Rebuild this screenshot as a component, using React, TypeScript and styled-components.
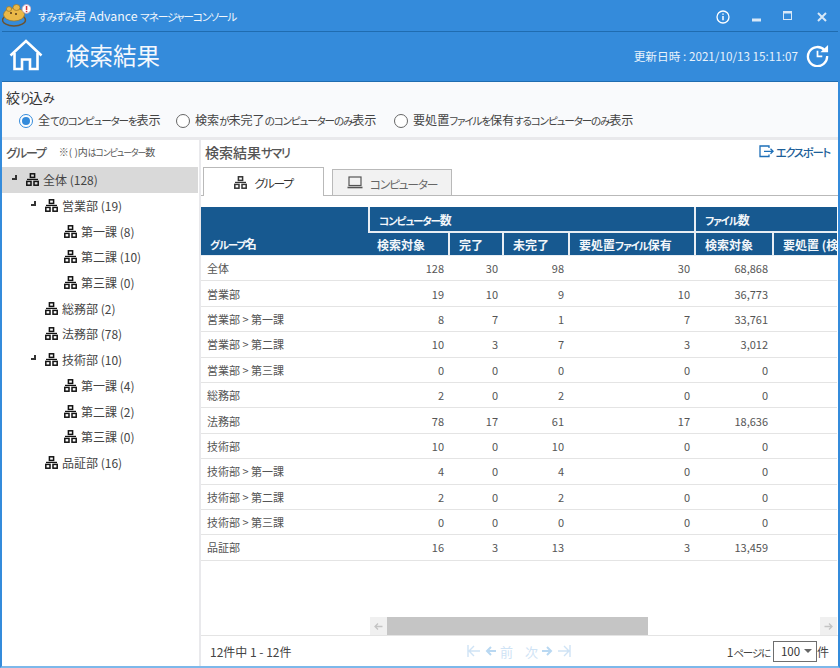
import React from "react";
import styled, { createGlobalStyle } from "styled-components";

const Global = createGlobalStyle`
  html, body { margin: 0; padding: 0; background: #fff; }
  body { font-family: "Noto Sans CJK JP", "Noto Sans", sans-serif; color: #444; font-feature-settings: "palt"; }
`;

const KanaRun = styled.span`font-size: 0.875em; letter-spacing: -0.11em;`;
const Jp = ({ t }: { t: string }) => (
  <>
    {t.split(/([ぁ-んァ-ヶー]+)/).map((s, i) => (i % 2 ? <KanaRun key={i}>{s}</KanaRun> : s))}
  </>
);

const Win = styled.div`
  width: 840px; height: 668px; box-sizing: border-box; overflow: hidden;
  display: flex; flex-direction: column; background: #fff;
  border-left: 2px solid #348bdb; border-right: 2px solid #348bdb; border-bottom: 2px solid #7db8ea;
`;
const TitleBar = styled.div`
  height: 31px; margin: 0 -2px; flex: none; background: #348bdb; border-bottom: 1px solid #1f6cb0;
  display: flex; align-items: center; color: #fff;
`;
const Logo = styled.svg`margin-left: 1px; flex: none;`;
const TitleText = styled.span`font-size: 12.3px; margin-left: 7px; flex: 1; color: #f2f7fc;`;
const WinBtns = styled.div`display: flex; align-items: center; margin: 2px 11px 0 0;`;
const WinBtn = styled.span<{ $gap: number }>`display: flex; margin-left: ${p => p.$gap}px;`;
const Header = styled.div`
  height: 49px; margin: 0 -2px; flex: none; background: #348bdb; border-bottom: 1px solid #1f6cb0;
  display: flex; align-items: center; color: #fff;
`;
const HomeIcon = styled.svg`margin: 0 0 3px 9px; flex: none;`;
const PageTitle = styled.h1`font-size: 23.5px; line-height: 30px; font-weight: 400; margin: 0 0 3px 23px; flex: 1; color: #f4f8fd;`;
const Updated = styled.span`font-size: 11.7px; color: #e8f2fb; margin: 0 8px 3px 0;`;
const RefreshIcon = styled.svg`margin: 0 11px 2px 0; flex: none;`;

const Filter = styled.div`
  height: 58px; flex: none; box-sizing: border-box; background: #f9fafc; padding: 7px 0 0 4px;
  border-bottom: 3px solid #e9e9ec;
`;
const FilterTitle = styled.div`font-size: 14px; line-height: 16px; color: #333;`;
const RadioRow = styled.div`display: grid; grid-template-columns: 157px 218px auto; margin: 6px 0 0 13px;`;
const RadioItem = styled.label`display: flex; align-items: center; gap: 5px; font-size: 12.1px; line-height: 16px; color: #444;`;
const RadioDot = styled.span<{ $on?: boolean }>`
  width: 14px; height: 14px; border-radius: 50%; box-sizing: border-box; background: #fff; flex: none;
  border: 1.5px solid ${p => (p.$on ? "#348bdb" : "#666")}; display: flex; align-items: center; justify-content: center;
  &::after { content: ""; width: 8px; height: 8px; border-radius: 50%; background: ${p => (p.$on ? "#348bdb" : "transparent")}; }
`;

const Body = styled.div`flex: 1; display: flex; min-height: 0;`;
const Left = styled.aside`width: 197px; flex: none; border-right: 2px solid #e9e9ec;`;
const LeftHead = styled.div`height: 23px; padding: 0 0 4px 4px; display: flex; align-items: center; gap: 13px;`;
const LeftTitle = styled.span`font-size: 14px; font-weight: 500; color: #555;`;
const LeftNote = styled.span`font-size: 10px; color: #555;`;
const Tree = styled.div`display: flex; flex-direction: column;`;
const TreeRow = styled.div<{ $level: number; $sel?: boolean }>`
  height: 25.7px; margin-right: 1px; display: flex; align-items: center; font-size: 12px; color: #444;
  padding-left: ${p => 9 + p.$level * 19}px; background: ${p => (p.$sel ? "#d9d9d9" : "transparent")};
`;
const Expander = styled.span`width: 15px; flex: none; display: flex; align-items: center;`;
const ExpMark = styled.span`
  display: block; width: 5px; height: 5px; border-right: 2px solid #333; border-bottom: 2px solid #333;
  box-sizing: border-box; margin: 0 0 2px 1px; transform: translateY(-1px);
`;
const TreeLabel = styled.span`margin-left: 4px; white-space: nowrap;`;

const Right = styled.main`flex: 1; min-width: 0; display: flex; flex-direction: column;`;
const RightHead = styled.div`height: 23px; padding: 0 8px 4px 4px; flex: none; display: flex; align-items: center; justify-content: space-between;`;
const RightTitle = styled.span`font-size: 14px; font-weight: 500; color: #555;`;
const ExportBtn = styled.span`display: flex; align-items: center; gap: 2px; font-size: 13px; color: #1d5f99; font-weight: 500;`;
const Tabs = styled.div`
  height: 29px; flex: none; box-sizing: border-box; display: flex; align-items: flex-end; padding-left: 2px; gap: 8px;
  border-bottom: 1px solid #b9b9b9;
`;
const Tab = styled.div<{ $active?: boolean }>`
  box-sizing: border-box; display: flex; align-items: center; justify-content: center; gap: 7px;
  width: ${p => (p.$active ? "121px" : "120px")}; height: ${p => (p.$active ? "29px" : "27px")};
  font-size: 13.5px; color: ${p => (p.$active ? "#333" : "#666")};
  background: ${p => (p.$active ? "#fff" : "#f2f2f2")};
  border: 1px solid #b9b9b9; border-bottom: ${p => (p.$active ? "0" : "1px solid #b9b9b9")};
  margin-bottom: -1px;
`;
const TableWrap = styled.div`flex: 1; min-height: 0; padding: 11px 0 0 0; overflow: hidden;`;
const Grid = styled.table`
  border-collapse: separate; border-spacing: 0; table-layout: fixed; width: 636px;
`;
const Th = styled.th`
  background: #175990; color: #f2f6fa; font-size: 12px; font-weight: 700; text-align: left;
  padding: 0 0 0 9px; height: 24px; overflow: hidden; white-space: nowrap;
  border-left: 2px solid #e8eef4;
  &:first-child { border-left: 0; }
`;
const ThName = styled(Th)`vertical-align: bottom; padding-bottom: 3px; border-bottom: 1px solid #e8eef4;`;
const ThSub = styled(Th)`border-top: 2px solid #e8eef4; border-bottom: 1px solid #e8eef4; height: 22px;`;
const Td = styled.td<{ $num?: boolean }>`
  height: 24.4px; padding: 0 4px 0 ${p => (p.$num ? 0 : 6)}px; font-size: 11px; color: #555;
  text-align: ${p => (p.$num ? "right" : "left")}; white-space: nowrap; overflow: hidden;
  border-bottom: 1px solid #e4e4e4;
`;
const Scrollbar = styled.div`
  height: 18px; flex: none; margin: 0 1px 0 169px; display: flex; align-items: stretch; background: #fff;
`;
const ScrollBtn = styled.span`width: 17px; flex: none; background: #f0f0f0; color: #bdbdbd; display: flex; align-items: center; justify-content: center;`;
const ScrollTrack = styled.div`flex: 1; display: flex;`;
const ScrollThumb = styled.div`width: 261px; background: #c5c5c5;`;
const Pager = styled.footer`
  height: 30px; flex: none; border-top: 1px solid #e4e4e4; display: flex; align-items: center;
  font-size: 12px; color: #444; padding: 0 9px 0 9px;
`;
const PageInfo = styled.span`width: 257px; flex: none;`;
const PagerNav = styled.div`display: flex; align-items: center; gap: 4px; color: #cfe3f5; font-size: 13px; flex: 1;`;
const PagerGap = styled.span`margin-left: 8px;`;
const PerPage = styled.div`display: flex; align-items: center;`;
const PageSelect = styled.span`
  box-sizing: border-box; width: 44px; height: 21px; margin-left: 3px; border: 1px solid #6e6e6e; display: flex; align-items: center;
  justify-content: space-between; padding: 0 4px 0 7px; font-size: 11.5px; color: #333;
  &::after { content: ""; border: 4px solid transparent; border-top: 4px solid #666; margin-top: 4px; }
`;

const Org = ({ size = 13, color = "#111" }: { size?: number; color?: string }) => (
  <svg width={size} height={size} viewBox="0 0 13 13" fill="none" stroke={color} strokeWidth="1.5" style={{ flex: "none" }}>
    <rect x="4.4" y="0.8" width="4.2" height="3.6" />
    <path d="M1 6.4h11" strokeWidth="1.2" />
    <rect x="0.8" y="8.4" width="4.2" height="3.8" />
    <rect x="8" y="8.4" width="4.2" height="3.8" />
  </svg>
);

const Mascot = () => (
  <Logo width="30" height="29" viewBox="0 1 30 29">
    <ellipse cx="13" cy="20" rx="11.5" ry="6" fill="none" stroke="#6b5230" strokeWidth="1.4" />
    <ellipse cx="13" cy="14.5" rx="10.5" ry="6.5" fill="#eab848" stroke="#9a7526" strokeWidth="0.7" />
    <ellipse cx="15.5" cy="7.5" rx="3.5" ry="3" fill="#eab848" stroke="#9a7526" strokeWidth="0.7" />
    <ellipse cx="8" cy="9" rx="2.6" ry="2.4" fill="#eab848" stroke="#9a7526" strokeWidth="0.7" />
    <circle cx="10" cy="13" r="1" fill="#55391a" />
    <circle cx="15" cy="14" r="1" fill="#55391a" />
    <circle cx="25.5" cy="9" r="4.4" fill="#fff" stroke="#cda6b2" strokeWidth="0.8" />
    <rect x="24.8" y="6" width="1.5" height="4" fill="#d8333a" />
    <rect x="24.8" y="10.8" width="1.5" height="1.4" fill="#d8333a" />
  </Logo>
);

type TreeItem = { level: number; label: string; exp?: boolean; sel?: boolean };
const tree: TreeItem[] = [
  { level: 0, label: "全体 (128)", exp: true, sel: true },
  { level: 1, label: "営業部 (19)", exp: true },
  { level: 2, label: "第一課 (8)" },
  { level: 2, label: "第二課 (10)" },
  { level: 2, label: "第三課 (0)" },
  { level: 1, label: "総務部 (2)" },
  { level: 1, label: "法務部 (78)" },
  { level: 1, label: "技術部 (10)", exp: true },
  { level: 2, label: "第一課 (4)" },
  { level: 2, label: "第二課 (2)" },
  { level: 2, label: "第三課 (0)" },
  { level: 1, label: "品証部 (16)" },
];

const rows: string[][] = [
  ["全体", "128", "30", "98", "30", "68,868"],
  ["営業部", "19", "10", "9", "10", "36,773"],
  ["営業部 > 第一課", "8", "7", "1", "7", "33,761"],
  ["営業部 > 第二課", "10", "3", "7", "3", "3,012"],
  ["営業部 > 第三課", "0", "0", "0", "0", "0"],
  ["総務部", "2", "0", "2", "0", "0"],
  ["法務部", "78", "17", "61", "17", "18,636"],
  ["技術部", "10", "0", "10", "0", "0"],
  ["技術部 > 第一課", "4", "0", "4", "0", "0"],
  ["技術部 > 第二課", "2", "0", "2", "0", "0"],
  ["技術部 > 第三課", "0", "0", "0", "0", "0"],
  ["品証部", "16", "3", "13", "3", "13,459"],
];

const widths = [167, 80, 54, 66, 126, 78, 65];

export default function App() {
  return (
    <Win>
      <Global />
      <TitleBar>
        <Mascot />
        <TitleText><Jp t="すみずみ君 Advance マネージャーコンソール" /></TitleText>
        <WinBtns>
          <WinBtn $gap={0}>
            <svg width="14" height="14" viewBox="0 0 14 14" fill="none" stroke="#fff" strokeWidth="1.3">
              <circle cx="7" cy="7" r="6" />
              <path d="M7 6v4.2M7 3.4v1.4" strokeWidth="1.5" />
            </svg>
          </WinBtn>
          <WinBtn $gap={20}>
            <svg width="14" height="14" viewBox="0 0 14 14"><rect x="2" y="8.5" width="9" height="3" fill="#d8e8f7" /></svg>
          </WinBtn>
          <WinBtn $gap={17}>
            <svg width="14" height="14" viewBox="0 0 14 14" fill="none" stroke="#d8e8f7"><rect x="2.5" y="1.5" width="8" height="8" /><path d="M2.5 2.5h8" strokeWidth="2" /></svg>
          </WinBtn>
          <WinBtn $gap={20}>
            <svg width="14" height="14" viewBox="0 0 14 14" fill="none" stroke="#d8e8f7" strokeWidth="2"><path d="M3 3l8 8M11 3l-8 8" /></svg>
          </WinBtn>
        </WinBtns>
      </TitleBar>
      <Header>
        <HomeIcon width="34" height="32" viewBox="0 0 34 32" fill="none" stroke="#fff" strokeWidth="2.6" strokeLinejoin="miter">
          <path d="M1.5 16.5L17 2l15.5 14.5" />
          <path d="M5.5 14v16h7.5V20.5h8V30h7.5V14" />
        </HomeIcon>
        <PageTitle>検索結果</PageTitle>
        <Updated>更新日時 : 2021/10/13 15:11:07</Updated>
        <RefreshIcon width="23" height="23" viewBox="0 0 24 24" fill="none" stroke="#fff" strokeWidth="2.4">
          <path d="M19.5 6.5A10 10 0 1 0 22 12.5" />
          <path d="M12 7v6h5" strokeWidth="1.8" />
          <path d="M15 8.5H23V1z" fill="#fff" stroke="none" />
        </RefreshIcon>
      </Header>
      <Filter>
        <FilterTitle><Jp t="絞り込み" /></FilterTitle>
        <RadioRow>
          <RadioItem><RadioDot $on /><span><Jp t="全てのコンピューターを表示" /></span></RadioItem>
          <RadioItem><RadioDot /><span><Jp t="検索が未完了のコンピューターのみ表示" /></span></RadioItem>
          <RadioItem><RadioDot /><span><Jp t="要処置ファイルを保有するコンピューターのみ表示" /></span></RadioItem>
        </RadioRow>
      </Filter>
      <Body>
        <Left>
          <LeftHead>
            <LeftTitle><Jp t="グループ" /></LeftTitle>
            <LeftNote><Jp t="※( )内はコンピューター数" /></LeftNote>
          </LeftHead>
          <Tree>
            {tree.map((t, i) => (
              <TreeRow key={i} $level={t.level} $sel={t.sel}>
                <Expander>{t.exp && <ExpMark />}</Expander>
                <Org />
                <TreeLabel>{t.label}</TreeLabel>
              </TreeRow>
            ))}
          </Tree>
        </Left>
        <Right>
          <RightHead>
            <RightTitle><Jp t="検索結果サマリ" /></RightTitle>
            <ExportBtn>
              <svg width="15" height="13" viewBox="0 0 15 13" fill="none" stroke="#1d6fb8" strokeWidth="1.3">
                <path d="M10 3V1H1v10.5h9V9.5" />
                <path d="M5 6.3h9M11.5 3.8l2.6 2.5-2.6 2.5" />
              </svg>
              <span><Jp t="エクスポート" /></span>
            </ExportBtn>
          </RightHead>
          <Tabs>
            <Tab $active><Org color="#333" /><span><Jp t="グループ" /></span></Tab>
            <Tab>
              <svg width="16" height="13" viewBox="0 0 16 13" fill="none" stroke="#555" strokeWidth="1.2">
                <rect x="2" y="1" width="12" height="8.5" />
                <path d="M0.5 11.5h15" strokeWidth="1.6" />
              </svg>
              <span><Jp t="コンピューター" /></span>
            </Tab>
          </Tabs>
          <TableWrap>
            <Grid>
              <colgroup>
                {widths.map((w, i) => <col key={i} style={{ width: w }} />)}
              </colgroup>
              <thead>
                <tr>
                  <ThName rowSpan={2}><Jp t="グループ名" /></ThName>
                  <Th colSpan={4}><Jp t="コンピューター数" /></Th>
                  <Th colSpan={2}><Jp t="ファイル数" /></Th>
                </tr>
                <tr>
                  <ThSub>検索対象</ThSub>
                  <ThSub>完了</ThSub>
                  <ThSub>未完了</ThSub>
                  <ThSub><Jp t="要処置ファイル保有" /></ThSub>
                  <ThSub>検索対象</ThSub>
                  <ThSub>要処置 (検</ThSub>
                </tr>
              </thead>
              <tbody>
                {rows.map((r, i) => (
                  <tr key={i}>
                    {r.map((c, j) => <Td key={j} $num={j > 0}>{c}</Td>)}
                    <Td $num />
                  </tr>
                ))}
              </tbody>
            </Grid>
          </TableWrap>
          <Scrollbar>
            <ScrollBtn>
              <svg width="9" height="9" viewBox="0 0 9 9" fill="none" stroke="#c4c4c4" strokeWidth="1.3"><path d="M8.5 4.5H1M4 1.5l-3 3 3 3" /></svg>
            </ScrollBtn>
            <ScrollTrack><ScrollThumb /></ScrollTrack>
            <ScrollBtn>
              <svg width="9" height="9" viewBox="0 0 9 9" fill="none" stroke="#c4c4c4" strokeWidth="1.3"><path d="M0.5 4.5H8M5 1.5l3 3-3 3" /></svg>
            </ScrollBtn>
          </Scrollbar>
          <Pager>
            <PageInfo>12件中 1 - 12件</PageInfo>
            <PagerNav>
              <svg width="14" height="12" viewBox="0 0 14 12" fill="none" stroke="#cfe3f5" strokeWidth="1.4"><path d="M1 0v12M13 6H2M7 1L2 6l5 5" /></svg>
              <svg width="11" height="10" viewBox="0 0 11 10" fill="none" stroke="#b9d8f2" strokeWidth="2"><path d="M11 5H2M6 1L2 5l4 4" /></svg>
              <span>前</span>
              <PagerGap>次</PagerGap>
              <svg width="11" height="10" viewBox="0 0 11 10" fill="none" stroke="#b9d8f2" strokeWidth="2"><path d="M0 5h9M5 1l4 4-4 4" /></svg>
              <svg width="14" height="12" viewBox="0 0 14 12" fill="none" stroke="#cfe3f5" strokeWidth="1.4"><path d="M13 0v12M1 6h11M7 1l5 5-5 5" /></svg>
            </PagerNav>
            <PerPage>
              <span><Jp t="1ページに" /></span>
              <PageSelect>100</PageSelect>
              件
            </PerPage>
          </Pager>
        </Right>
      </Body>
    </Win>
  );
}
